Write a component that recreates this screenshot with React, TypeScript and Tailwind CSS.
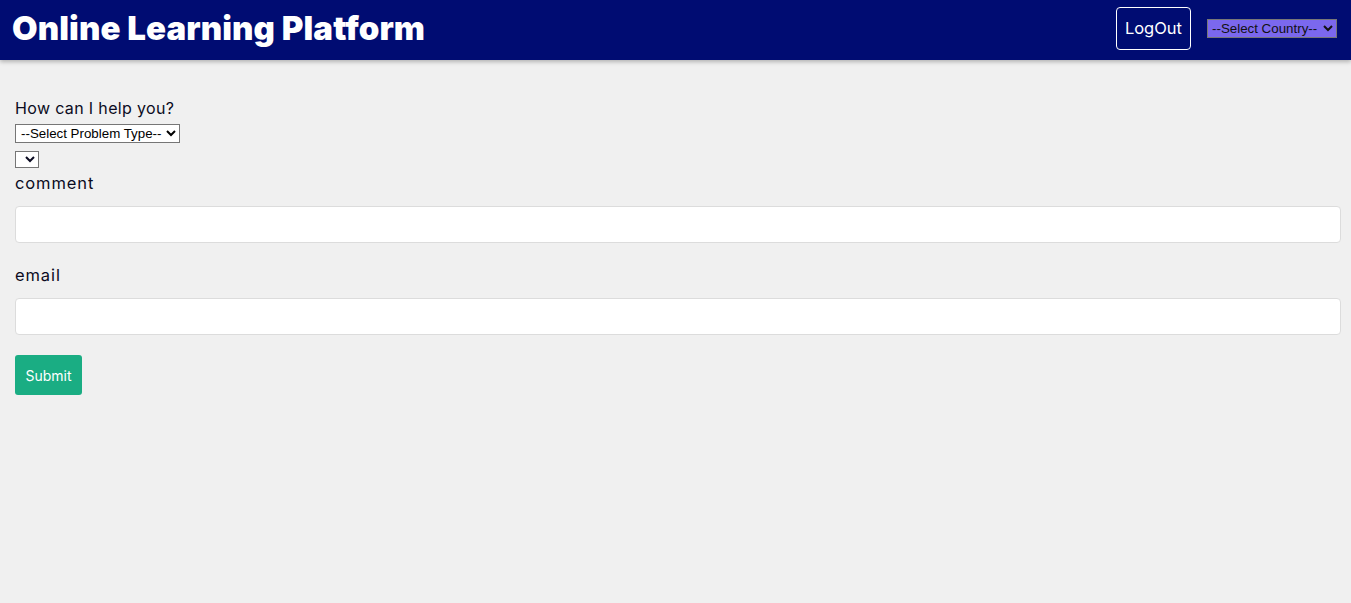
import React from "react";

// Pagina de suporte: header azul + formular simplu
export default function App() {
  return (
    <div className="min-h-[603px] bg-[#f0f0f0] font-['Inter','Noto_Sans',sans-serif]">
      <header className="flex h-[60px] items-center justify-between bg-[#000c72] pl-[12px] pr-[14px] shadow-[0_2px_4px_rgba(0,0,0,0.25)]">
        <h1 className="mb-[2px] text-[33px] font-black tracking-[0.1px] text-white">
          Online Learning Platform
        </h1>
        <div className="mb-[3px] flex items-center gap-[16px]">
          <button className="h-[43px] rounded-[4px] border border-white px-[8px] text-[16.5px] text-white">
            LogOut
          </button>
          <select className="h-[19px] w-[130px] border border-[#777] bg-[#7b68ee] font-['Liberation_Sans',Arial,sans-serif] text-[13.33px] text-[#111]">
            <option>--Select Country--</option>
          </select>
        </div>
      </header>

      <main className="px-[15px] pt-[37px] pr-[10px]">
        <div className="flex flex-col items-start text-[#0b0b22]">
          <label className="text-[16px] leading-[22px] tracking-[0.35px]">How can I help you?</label>
          <select className="mt-[5px] h-[19px] border border-[#767676] bg-white px-[1px] font-['Liberation_Sans',Arial,sans-serif] text-[13.33px] text-black">
            <option>--Select Problem Type--</option>
          </select>
          <select className="mt-[8px] h-[17px] w-[24px] border border-[#767676] bg-white font-['Liberation_Sans',Arial,sans-serif] text-[13.33px]">
            <option></option>
          </select>
          <label className="mt-[4px] text-[16.5px] leading-[22px] tracking-[0.9px]">comment</label>
          <input className="mt-[12px] h-[37px] w-full rounded-[4px] border border-[#dcdcdc] bg-white px-3" />
          <label className="mt-[21px] text-[16.5px] leading-[22px] tracking-[0.9px]">email</label>
          <input className="mt-[12px] h-[37px] w-full rounded-[4px] border border-[#dcdcdc] bg-white px-3" />
          <button className="mt-[20px] h-[40px] w-[67px] rounded-[3px] bg-[#1aad83] text-[14px] text-white">
            Submit
          </button>
        </div>
      </main>
    </div>
  );
}
